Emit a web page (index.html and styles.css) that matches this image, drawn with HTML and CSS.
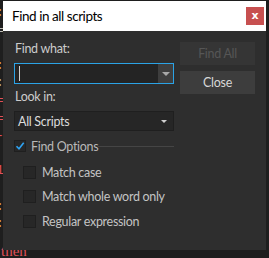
FILE: index.html
```html
<!DOCTYPE html>
<html lang="en">
<head>
    <meta charset="UTF-8">
    <title>Find in all scripts</title>
    <link rel="stylesheet" href="styles.css">
</head>
<body>

    <div class="editor">
        <div class="code-line"><span class="c-orange">:</span></div>
        <div class="code-line"><span class="c-gray">=</span></div>
        <div class="code-line"></div>
        <div class="code-line"><span class="c-orange">:</span></div>
        <div class="code-line"><span class="c-gray">:</span></div>
        <div class="code-line"><span class="c-red">=</span></div>
        <div class="code-line"><span class="c-red">=</span></div>
        <div class="code-line"><span class="c-red">-</span></div>
        <div class="code-line"></div>
        <div class="code-line"><span class="c-red">1</span></div>
        <div class="code-line"></div>
        <div class="code-line"><span class="c-orange">:</span></div>
        <div class="code-line"><span class="c-orange">:</span></div>
        <div class="code-line then"><span class="c-red">then</span></div>
    </div>

    <div class="dialog">
        <div class="titlebar">
            <span class="title">Find in all scripts</span>
            <button class="close-x">x</button>
        </div>

        <div class="dialog-body">
            <div class="left-col">
                <label class="field-label">Find what:</label>
                <div class="combo">
                    <span class="caret"></span>
                    <span class="combo-arrow"><span class="tri"></span></span>
                </div>

                <label class="field-label look">Look in:</label>
                <div class="select">
                    <span>All Scripts</span>
                    <span class="tri small"></span>
                </div>

                <div class="group-head">
                    <span class="box checked">
                        <svg width="10" height="10" viewBox="0 0 10 10">
                            <path d="M1.5 5.2 L4 7.8 L8.7 1.8" fill="none" stroke="#2ea3f2" stroke-width="1.6"/>
                        </svg>
                    </span>
                    <span class="group-title">Find Options</span>
                    <span class="group-line"></span>
                </div>

                <div class="options">
                    <div class="option"><span class="box"></span>Match case</div>
                    <div class="option"><span class="box"></span>Match whole word only</div>
                    <div class="option"><span class="box"></span>Regular expression</div>
                </div>
            </div>

            <div class="right-col">
                <button class="btn disabled">Find All</button>
                <button class="btn">Close</button>
            </div>
        </div>
    </div>

</body>
</html>
```

FILE: styles.css
```css
body {
    margin: 0;
    padding: 0;
    width: 269px;
    height: 258px;
    overflow: hidden;
    background-color: #1e1e1e;
    font-family: "Lato", "Noto Sans", sans-serif;
    position: relative;
}

.editor {
    font-family: "Liberation Mono", monospace;
    font-size: 13px;
    padding-top: 4px;
}

.code-line {
    height: 17.6px;
    line-height: 17.6px;
    margin-left: -4px;
}

.code-line.then {
    margin-top: 10px;
    margin-left: 1px;
    font-family: "Liberation Serif", serif;
    font-size: 15px;
}

.c-orange { color: #d8a35a; }
.c-gray { color: #b9b9b9; }
.c-red { color: #e0505a; }

.dialog {
    position: absolute;
    left: 3px;
    top: 1px;
    width: 263px;
    height: 249px;
    background-color: #2e2e2e;
}

.titlebar {
    height: 30px;
    background-color: #fff;
    display: flex;
    align-items: center;
    justify-content: space-between;
    padding: 0 2px 0 9px;
}

.title {
    font-size: 13.5px;
    letter-spacing: -0.45px;
    color: #000;
}

.close-x {
    width: 18px;
    height: 18px;
    border: none;
    padding: 0;
    background-color: #c75050;
    color: #fff;
    font-family: "DejaVu Sans", sans-serif;
    font-weight: bold;
    font-size: 11px;
    line-height: 16px;
}

.dialog-body {
    display: flex;
    gap: 6px;
    padding: 10px 0 0 11px;
}

.left-col {
    width: 160px;
}

.field-label {
    display: block;
    height: 16px;
    line-height: 16px;
    font-size: 12.5px;
    letter-spacing: -0.3px;
    color: #cccccc;
    padding-left: 1px;
}

.combo {
    margin-top: 6px;
    height: 21px;
    box-sizing: border-box;
    border: 1px solid #2ba3e6;
    background-color: #242424;
    display: flex;
    align-items: center;
    justify-content: space-between;
}

.caret {
    width: 1px;
    height: 15px;
    margin-left: 4px;
    background-color: #d0d0d0;
}

.combo-arrow {
    width: 15px;
    height: 19px;
    background-color: #3e3e3e;
    display: flex;
    align-items: center;
    justify-content: center;
}

.tri {
    width: 0;
    height: 0;
    border-left: 4px solid transparent;
    border-right: 4px solid transparent;
    border-top: 4px solid #a8a8a8;
}

.tri.small {
    border-left-width: 3px;
    border-right-width: 3px;
    border-top-width: 3px;
    border-top-color: #d0d0d0;
    margin-right: 6px;
}

.field-label.look {
    margin-top: 5px;
}

.select {
    margin-top: 6px;
    height: 20px;
    box-sizing: border-box;
    border: 1px solid #1f1f1f;
    background-color: #262626;
    display: flex;
    align-items: center;
    justify-content: space-between;
    padding-left: 3px;
    font-size: 12.5px;
    letter-spacing: -0.3px;
    color: #dcdcdc;
}

.group-head {
    margin-top: 7px;
    height: 16px;
    display: flex;
    align-items: center;
    gap: 5px;
}

.box {
    width: 12px;
    height: 12px;
    box-sizing: border-box;
    border: 1px solid #1f1f1f;
    background-color: #272727;
    display: flex;
    align-items: center;
    justify-content: center;
    flex-shrink: 0;
}

.group-title {
    font-size: 12.5px;
    letter-spacing: -0.3px;
    color: #b8b8b8;
    white-space: nowrap;
}

.group-line {
    flex: 1;
    height: 1px;
    background-color: #454545;
    margin-left: -5px;
}

.options {
    margin-top: 6px;
    padding-left: 9px;
}

.option {
    height: 24.5px;
    display: flex;
    align-items: center;
    gap: 6px;
    font-size: 12.5px;
    letter-spacing: -0.3px;
    color: #c4c4c4;
    white-space: nowrap;
}

.option .box {
    width: 13px;
    height: 13px;
}

.right-col {
    display: flex;
    flex-direction: column;
    gap: 6px;
    padding-top: 1px;
}

.btn {
    width: 75px;
    height: 23px;
    border: none;
    background-color: #3d3d3d;
    color: #d8d8d8;
    font-family: "Lato", "Noto Sans", sans-serif;
    font-size: 12.5px;
    letter-spacing: -0.3px;
    padding: 0;
}

.btn.disabled {
    background-color: #353535;
    color: #565656;
}
```
